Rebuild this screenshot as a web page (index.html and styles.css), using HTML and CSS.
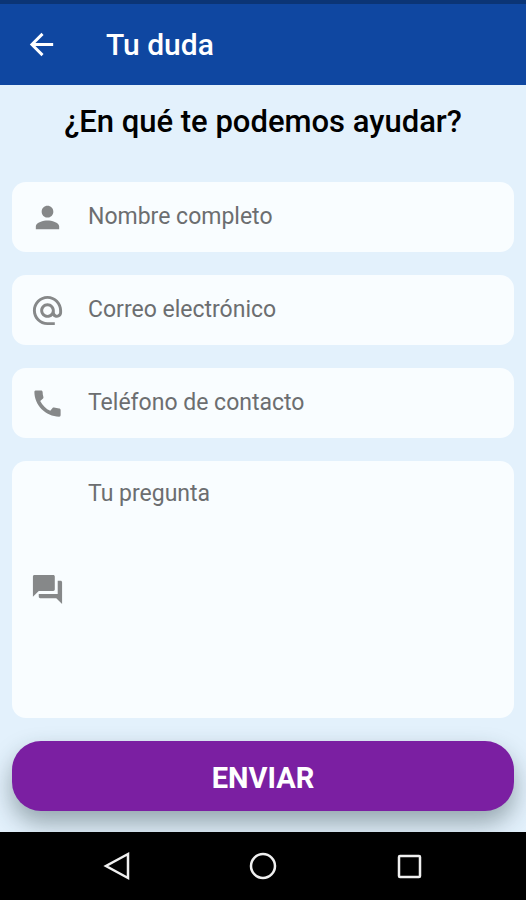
FILE: index.html
```
<!DOCTYPE html>
<html lang="es">
<head>
    <meta charset="UTF-8">
    <meta name="viewport" content="width=device-width, initial-scale=1.0">
    <title>Tu duda</title>
    <link rel="stylesheet" href="styles.css">
</head>
<body>
    <header class="app-bar">
        <a class="back-link" href="#" aria-label="Volver">
            <svg class="icon" viewBox="0 0 24 24"><path d="M20 11H7.83l5.59-5.59L12 4l-8 8 8 8 1.41-1.41L7.83 13H20v-2z"/></svg>
        </a>
        <h1 class="app-title">Tu duda</h1>
    </header>

    <main class="content">
        <h2 class="question-title">¿En qué te podemos ayudar?</h2>

        <form class="contact-form">
            <label class="field">
                <svg class="icon" viewBox="0 0 24 24"><path d="M12 12c2.21 0 4-1.79 4-4s-1.79-4-4-4-4 1.79-4 4 1.79 4 4 4zm0 2c-2.67 0-8 1.34-8 4v2h16v-2c0-2.66-5.33-4-8-4z"/></svg>
                <input type="text" name="nombre" placeholder="Nombre completo" aria-label="Nombre completo">
            </label>

            <label class="field">
                <svg class="icon" viewBox="0 0 24 24"><path d="M12 2C6.48 2 2 6.48 2 12s4.48 10 10 10h5v-2h-5c-4.34 0-8-3.66-8-8s3.66-8 8-8 8 3.66 8 8v1.43c0 .79-.71 1.57-1.5 1.57s-1.5-.78-1.5-1.57V12c0-2.76-2.24-5-5-5s-5 2.24-5 5 2.24 5 5 5c1.38 0 2.64-.56 3.54-1.47.65.89 1.77 1.47 2.96 1.47 1.97 0 3.5-1.6 3.5-3.57V12c0-5.52-4.48-10-10-10zm0 13c-1.66 0-3-1.34-3-3s1.34-3 3-3 3 1.34 3 3-1.34 3-3 3z"/></svg>
                <input type="email" name="correo" placeholder="Correo electrónico" aria-label="Correo electrónico">
            </label>

            <label class="field">
                <svg class="icon" viewBox="0 0 24 24"><path d="M20.01 15.38c-1.23 0-2.42-.2-3.53-.56-.35-.12-.74-.03-1.01.24l-1.57 1.97c-2.83-1.35-5.48-3.9-6.89-6.83l1.95-1.66c.27-.28.35-.67.24-1.02-.37-1.11-.56-2.3-.56-3.53 0-.54-.45-.99-.99-.99H4.19C3.65 3 3 3.24 3 3.99 3 13.28 10.73 21 20.01 21c.71 0 .99-.63.99-1.18v-3.45c0-.54-.45-.99-.99-.99z"/></svg>
                <input type="tel" name="telefono" placeholder="Teléfono de contacto" aria-label="Teléfono de contacto">
            </label>

            <label class="field field-large">
                <svg class="icon" viewBox="0 0 24 24"><path d="M21 6h-2v9H6v2c0 .55.45 1 1 1h11l4 4V7c0-.55-.45-1-1-1zm-4 6V3c0-.55-.45-1-1-1H3c-.55 0-1 .45-1 1v14l4-4h10c.55 0 1-.45 1-1z"/></svg>
                <textarea name="pregunta" rows="8" placeholder="Tu pregunta" aria-label="Tu pregunta"></textarea>
            </label>

            <button class="submit-button" type="submit">ENVIAR</button>
        </form>
    </main>

    <nav class="system-nav">
        <button type="button" aria-label="Atrás">
            <svg viewBox="0 0 30 30"><path d="M26 3v24L4 15z"/></svg>
        </button>
        <button type="button" aria-label="Inicio">
            <svg viewBox="0 0 30 30"><circle cx="15" cy="15" r="12"/></svg>
        </button>
        <button type="button" aria-label="Recientes">
            <svg viewBox="0 0 30 30"><rect x="5" y="5" width="21" height="21" rx="1"/></svg>
        </button>
    </nav>
</body>
</html>
```
FILE: styles.css
```
/* Base styles */
:root {
    --color-primary: #0f47a1;
    --color-primary-dark: #0b3576;
    --color-background: #e3f1fc;
    --color-field: #f9fdff;
    --color-icon: #868889;
    --color-hint: #6c6e70;
    --color-accent: #7b1fa2;
}

* {
    margin: 0;
    padding: 0;
    box-sizing: border-box;
}

body {
    display: flex;
    flex-direction: column;
    min-height: 100vh;
    font-family: Roboto, "Liberation Sans", sans-serif;
    background: var(--color-background);
}

.icon {
    display: block;
    flex-shrink: 0;
    width: 35px;
    height: 35px;
    fill: currentColor;
}

/* App bar */
.app-bar {
    display: flex;
    align-items: center;
    gap: 47px;
    height: 85px;
    padding: 0 24px;
    border-top: 4px solid var(--color-primary-dark);
    background: var(--color-primary);
    color: #fff;
}

.back-link {
    color: inherit;
}

.app-title {
    font-size: 30px;
    font-weight: 500;
    line-height: 40px;
}

/* Form */
.content {
    flex: 1;
    padding: 17px 12px 21px;
    overflow: hidden;
}

.question-title {
    margin-bottom: 40px;
    font-size: 31px;
    font-weight: 500;
    line-height: 40px;
    text-align: center;
}

.contact-form {
    display: flex;
    flex-direction: column;
    gap: 23px;
}

.field {
    display: flex;
    align-items: center;
    gap: 23px;
    min-height: 70px;
    padding: 0 18px;
    border-radius: 14px;
    background: var(--color-field);
    color: var(--color-icon);
}

.field input,
.field textarea {
    flex: 1;
    min-width: 0;
    border: none;
    outline: none;
    background: transparent;
    color: #212121;
    font-family: inherit;
    font-size: 23px;
    line-height: 28px;
    resize: none;
}

.field ::placeholder {
    color: var(--color-hint);
    opacity: 1;
}

.field-large textarea {
    height: 257px;
    padding: 19px 0;
}

.submit-button {
    height: 70px;
    border: none;
    border-radius: 29px;
    background: var(--color-accent);
    box-shadow: 0 12px 24px rgba(30, 50, 55, 0.4);
    color: #fff;
    font-family: inherit;
    font-size: 29px;
    font-weight: 700;
    line-height: 36px;
    padding-top: 3px;
    cursor: pointer;
}

/* Android navigation bar */
.system-nav {
    display: flex;
    justify-content: center;
    height: 68px;
    background: #000;
}

.system-nav button {
    display: flex;
    align-items: center;
    justify-content: center;
    width: 146px;
    border: none;
    background: none;
}

.system-nav svg {
    width: 30px;
    height: 30px;
    fill: none;
    stroke: #f0f0f0;
    stroke-width: 2.5;
}
```
